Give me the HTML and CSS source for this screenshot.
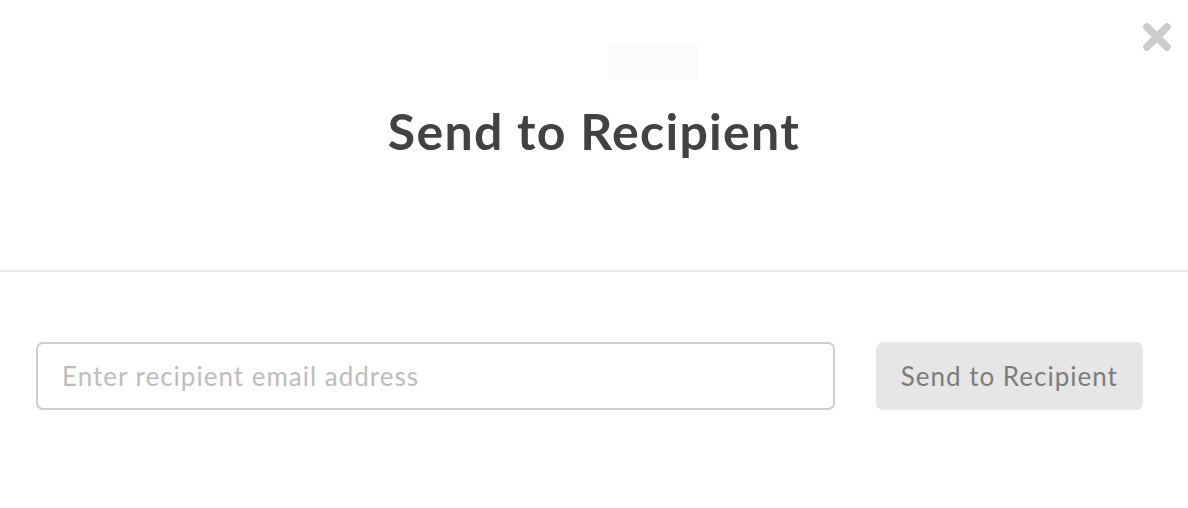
FILE: index.html
```html
<!DOCTYPE html>
<html lang="en">
<head>
<meta charset="utf-8">
<title>Send to Recipient</title>
<link rel="stylesheet" href="styles.css">
</head>
<body>
<div class="modal">
  <button class="close" aria-label="Close">
    <svg width="30" height="30" viewBox="0 0 30 30"><path d="M5 5 L25 25 M25 5 L5 25" stroke="#cccccc" stroke-width="7.5" stroke-linecap="round" fill="none"/></svg>
  </button>
  <header class="head">
    <div class="ghost"></div>
    <h1 class="title">Send to Recipient</h1>
  </header>
  <div class="divider"></div>
  <form class="form-row">
    <input class="email" type="email" placeholder="Enter recipient email address">
    <button class="send" type="button">Send to Recipient</button>
  </form>
</div>
</body>
</html>
```
FILE: styles.css
```css
html, body {
  margin: 0;
  padding: 0;
  background: #ffffff;
}
body {
  font-family: Lato, "Open Sans", Arial, sans-serif;
}
.modal {
  position: relative;
  width: 1188px;
  height: 508px;
  background: #ffffff;
}
.close {
  position: absolute;
  top: 22px;
  right: 16px;
  width: 30px;
  height: 30px;
  padding: 0;
  border: 0;
  background: transparent;
  cursor: pointer;
}
.close svg { display: block; }
.head {
  height: 270px;
  display: flex;
  flex-direction: column;
}
.ghost {
  margin: 44px 0 0 609px;
  width: 89px;
  height: 35px;
  background: #fbfbfb;
  border-radius: 3px;
}
.title {
  margin: 22px 0 0;
  text-align: center;
  font-size: 50px;
  line-height: 60px;
  font-weight: 700;
  letter-spacing: 1.3px;
  color: #424242;
}
.divider {
  height: 2px;
  background: #e5e5e5;
}
.form-row {
  display: flex;
  gap: 41px;
  padding: 70px 45px 0 36px;
  margin: 0;
}
.email {
  width: 800px;
  height: 68px;
  box-sizing: border-box;
  border: 2px solid #cfcfcf;
  border-radius: 7px;
  padding: 0 24px;
  font-family: Lato, "Open Sans", Arial, sans-serif;
  font-size: 26px;
  letter-spacing: 1px;
  color: #404040;
  outline: none;
}
.email::placeholder {
  color: #bdbdbd;
}
.send {
  width: 268px;
  height: 68px;
  border: 0;
  border-radius: 7px;
  background: #e6e6e6;
  color: #7c7c7c;
  font-family: Lato, "Open Sans", Arial, sans-serif;
  font-size: 26px;
  letter-spacing: 1px;
  padding: 0;
}
```
